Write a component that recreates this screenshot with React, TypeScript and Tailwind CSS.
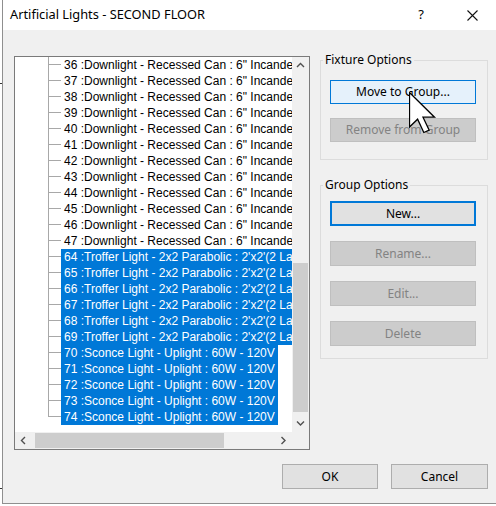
import React from "react";

type Row = { text: string; selected?: boolean };

const rows: Row[] = [
  ...Array.from({ length: 12 }, (_, i) => ({
    text: `${36 + i} :Downlight - Recessed Can : 6" Incandescent - 120V`,
  })),
  ...Array.from({ length: 6 }, (_, i) => ({
    text: `${64 + i} :Troffer Light - 2x2 Parabolic : 2'x2'(2 Lamps) - 120V`,
    selected: true,
  })),
  ...Array.from({ length: 5 }, (_, i) => ({
    text: `${70 + i} :Sconce Light - Uplight : 60W - 120V`,
    selected: true,
  })),
];

const uiFont = "[font-family:'Segoe_UI','Noto_Sans',sans-serif]";

const Chevron = ({ dir }: { dir: "up" | "down" | "left" | "right" }) => {
  const d = {
    up: "M1 5 L4.5 1.5 L8 5",
    down: "M1 1.5 L4.5 5 L8 1.5",
    left: "M5 1 L1.5 4.5 L5 8",
    right: "M1.5 1 L5 4.5 L1.5 8",
  }[dir];
  const vertical = dir === "up" || dir === "down";
  return (
    <svg
      width={vertical ? 9 : 7}
      height={vertical ? 7 : 9}
      viewBox={vertical ? "0 0 9 7" : "0 0 7 9"}
      fill="none"
      stroke="#505050"
      strokeWidth="1.4"
    >
      <path d={d} />
    </svg>
  );
};

const TreeRow = ({ row, last }: { row: Row; last: boolean }) => (
  <div className="flex h-[16px]">
    <div className="w-[33px] shrink-0" />
    <div className="flex w-[13px] shrink-0 flex-col">
      <div className="h-[8px] border-b border-l border-[#a8a8a8]" />
      {!last && <div className="h-[8px] border-l border-[#a8a8a8]" />}
    </div>
    <div
      className={
        row.selected
          ? "h-[16px] whitespace-nowrap bg-[#0078d7] px-[3px] leading-[16px] text-white"
          : "h-[16px] whitespace-nowrap px-[3px] leading-[16px] text-black"
      }
    >
      {row.text}
    </div>
  </div>
);

const Button = ({
  label,
  variant = "normal",
}: {
  label: string;
  variant?: "normal" | "hover" | "default" | "disabled";
}) => {
  const styles = {
    normal: "bg-[#e1e1e1] border-[#adadad] text-black",
    hover: "bg-[#e5f1fb] border-[#0078d7] text-black",
    default:
      "bg-[#e1e1e1] border-[#0078d7] text-black shadow-[inset_0_0_0_1px_#0078d7]",
    disabled: "bg-[#cccccc] border-[#bfbfbf] text-[#838383]",
  }[variant];
  return (
    <div
      className={`flex h-full w-full items-center justify-center border text-[12px] ${styles}`}
    >
      {label}
    </div>
  );
};

const Cursor = () => (
  <svg width="28" height="42" viewBox="0 0 28 42" className="absolute left-[86px] top-[24px]">
    <path
      d="M0.5 0.5 L0.5 35 L8.6 27.2 L14.8 40.5 L20.2 38.2 L14 25.2 L25.5 25.2 Z"
      fill="white"
      stroke="black"
      strokeWidth="1.3"
      strokeLinejoin="miter"
    />
  </svg>
);

export default function App() {
  return (
    <div className={`flex h-[506px] w-[496px] overflow-hidden bg-white ${uiFont}`}>
      <div className="flex w-[2px] shrink-0 flex-col">
        <div className="h-[83px]" />
        <div className="h-[1px] bg-[#333]" />
        <div className="h-[404px]" />
        <div className="h-[1px] bg-[#333]" />
      </div>
      <div className="flex h-[504px] flex-1 flex-col border-b border-l border-[#8f8f8f] bg-[#f0f0f0]">
        {/* title bar */}
        <div className="flex h-[30px] items-center bg-white pl-[7px] text-[12.8px] text-black">
          <span>Artificial Lights - SECOND FLOOR</span>
          <span className="ml-auto w-[14px] text-center text-[13px]">?</span>
          <div className="ml-[38px] mr-[18px] flex w-[12px] justify-center">
            <svg width="11" height="11" viewBox="0 0 11 11" stroke="#111" strokeWidth="1.1">
              <path d="M0.5 0.5 L10.5 10.5 M10.5 0.5 L0.5 10.5" />
            </svg>
          </div>
        </div>

        <div className="flex pl-[11px] pt-[22px]">
          {/* tree list */}
          <div className="mt-[4px] flex h-[394px] w-[296px] flex-col border border-[#7a7a7a] bg-white">
            <div className="flex h-[375px]">
              <div className="h-full w-[277px] overflow-hidden font-['Liberation_Sans',Arial,sans-serif] text-[12px]">
                {rows.map((r, i) => (
                  <TreeRow key={i} row={r} last={i === rows.length - 1} />
                ))}
              </div>
              <div className="flex h-full w-[17px] flex-col bg-[#f0f0f0]">
                <div className="flex h-[17px] items-center justify-center">
                  <Chevron dir="up" />
                </div>
                <div className="h-[189px]" />
                <div className="mx-[1px] h-[149px] bg-[#cdcdcd]" />
                <div className="flex-1" />
                <div className="flex h-[17px] items-center justify-center">
                  <Chevron dir="down" />
                </div>
              </div>
            </div>
            <div className="flex h-[17px]">
              <div className="flex w-[277px] bg-[#f0f0f0]">
                <div className="flex w-[17px] items-center justify-center">
                  <Chevron dir="left" />
                </div>
                <div className="w-[3px]" />
                <div className="my-[1px] w-[189px] bg-[#cdcdcd]" />
                <div className="flex-1" />
                <div className="flex w-[17px] items-center justify-center">
                  <Chevron dir="right" />
                </div>
              </div>
              <div className="w-[17px] bg-[#f0f0f0]" />
            </div>
          </div>

          {/* options */}
          <div className="ml-[10px] flex w-[168px] flex-col text-[12px] text-black">
            <fieldset className="border border-[#dcdcdc] pl-[2px]">
              <legend className="px-[2px] leading-[16px]">Fixture Options</legend>
              <div className="relative flex flex-col gap-[14px] pb-[17px] pl-[7px] pr-[11px] pt-[12px]">
                <div className="h-[24px]">
                  <Button label="Move to Group..." variant="hover" />
                </div>
                <div className="h-[24px]">
                  <Button label="Remove from Group" variant="disabled" />
                </div>
                <Cursor />
              </div>
            </fieldset>

            <fieldset className="mt-[17px] border border-[#dcdcdc] pl-[2px]">
              <legend className="px-[2px] leading-[16px]">Group Options</legend>
              <div className="flex flex-col gap-[15px] pb-[12px] pl-[7px] pr-[11px] pt-[8px]">
                <div className="h-[25px]">
                  <Button label="New..." variant="default" />
                </div>
                <div className="h-[25px]">
                  <Button label="Rename..." variant="disabled" />
                </div>
                <div className="h-[25px]">
                  <Button label="Edit..." variant="disabled" />
                </div>
                <div className="h-[25px]">
                  <Button label="Delete" variant="disabled" />
                </div>
              </div>
            </fieldset>
          </div>
        </div>

        {/* bottom buttons */}
        <div className="mt-[14px] flex justify-end gap-[13px] pr-[8px]">
          <div className="h-[25px] w-[96px]">
            <Button label="OK" />
          </div>
          <div className="h-[25px] w-[97px]">
            <Button label="Cancel" />
          </div>
        </div>
      </div>
    </div>
  );
}
